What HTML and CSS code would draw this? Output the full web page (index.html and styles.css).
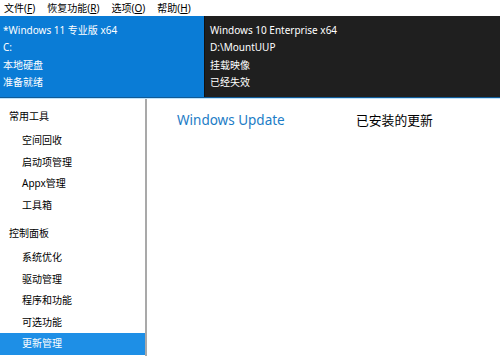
FILE: index.html
```html
<!doctype html>
<html lang="zh-CN">
<head>
    <meta charset="utf-8"/>
    <title>Dism++</title>
    <link rel="stylesheet" href="styles.css">
</head>
<body>
    <!--菜单栏-->
    <div class="menubar">
        <span class="menu">文件(<u>F</u>)</span>
        <span class="menu">恢复功能(<u>R</u>)</span>
        <span class="menu">选项(<u>O</u>)</span>
        <span class="menu">帮助(<u>H</u>)</span>
    </div>

    <!--映像列表-->
    <div class="images">
        <div class="image active">
            <p>*Windows 11 专业版 x64</p>
            <p>C:</p>
            <p>本地硬盘</p>
            <p>准备就绪</p>
        </div>
        <div class="image dark">
            <p>Windows 10 Enterprise x64</p>
            <p>D:\MountUUP</p>
            <p>挂载映像</p>
            <p>已经失效</p>
        </div>
    </div>

    <div class="main">
        <!--左侧导航-->
        <ul class="side">
            <li class="group">常用工具</li>
            <li class="item">空间回收</li>
            <li class="item">启动项管理</li>
            <li class="item">Appx管理</li>
            <li class="item">工具箱</li>
            <li class="group">控制面板</li>
            <li class="item">系统优化</li>
            <li class="item">驱动管理</li>
            <li class="item">程序和功能</li>
            <li class="item">可选功能</li>
            <li class="item current">更新管理</li>
        </ul>
        <!--内容-->
        <div class="content">
            <div class="tabs">
                <span class="tab on">Windows Update</span>
                <span class="tab">已安装的更新</span>
            </div>
        </div>
    </div>
</body>
</html>
```

FILE: styles.css
```css
* {
    padding: 0;
    margin: 0;
    list-style: none;
    border: 0;
}

body {
    width: 500px;
    height: 356px;
    overflow: hidden;
    background: #fff;
    font-family: "Noto Sans", "Noto Sans CJK SC", sans-serif;
    font-size: 10px;
    color: #000;
}

.menubar {
    height: 16px;
    line-height: 16px;
    display: flex;
    padding-left: 4px;
}

.menu {
    margin-right: 12px;
}

.menu u {
    text-decoration: underline;
}

.images {
    display: flex;
    height: 81px;
    border-bottom: 1px solid #0f5a96;
}

.image {
    padding: 6px 0 0 3px;
    color: #fff;
}

.image p {
    line-height: 17.4px;
    white-space: nowrap;
}

.active {
    width: 201px;
    flex-shrink: 0;
    background: #0a7cd6;
}

.dark {
    flex: 1;
    background: #1f1f1f;
    padding-left: 5px;
    border-left: 1px solid #111;
}

.main {
    display: flex;
    height: 258px;
    border-top: 1px solid #bfe3fa;
}

.side {
    width: 145px;
    flex-shrink: 0;
    border-right: 2px solid #a9a9a9;
}

.side .group {
    height: 22px;
    line-height: 22px;
    margin: 6px 0 3px;
    padding-left: 9px;
}

.side .item {
    height: 21.5px;
    line-height: 21.5px;
    padding-left: 22px;
}

.side .current {
    background: #1e8fe6;
    color: #fff;
}

.content {
    flex: 1;
    min-width: 0;
    padding: 12px 0 0 30px;
}

.tabs {
    display: flex;
    line-height: 18px;
}

.tab {
    font-size: 12.8px;
    white-space: nowrap;
}

.tab.on {
    width: 179px;
    flex-shrink: 0;
    color: #1c7cc6;
    font-size: 13.5px;
}
```
